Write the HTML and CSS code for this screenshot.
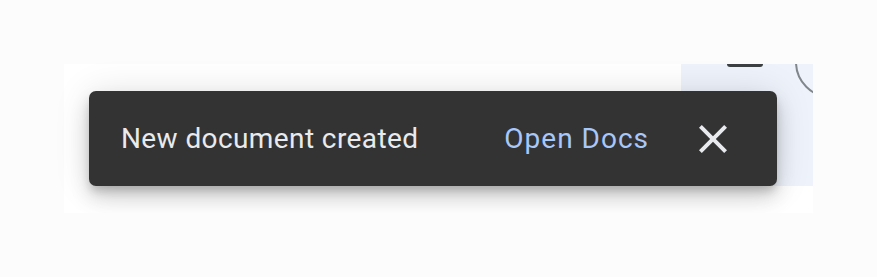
FILE: index.html
```html
<!DOCTYPE html>
<html>
<head>
<meta charset="utf-8">
<link rel="stylesheet" href="styles.css">
</head>
<body>
<div class="panel">
  <div class="side">
    <div class="tab"></div>
    <div class="ring"></div>
  </div>
  <div class="snackbar" role="status">
    <span class="label">New document created</span>
    <button class="action">Open Docs</button>
    <button class="close" aria-label="Close">
      <svg viewBox="0 0 24 24" width="48" height="48"><path fill="#e8eaed" d="M19 6.41L17.59 5 12 10.59 6.41 5 5 6.41 10.59 12 5 17.59 6.41 19 12 13.41 17.59 19 19 17.59 13.41 12z"/></svg>
    </button>
  </div>
</div>
</body>
</html>
```

FILE: styles.css
```css
html, body {
  margin: 0;
  padding: 0;
  background: #fcfcfc;
}
body {
  padding: 64px 0 0 64px;
  font-family: Roboto, "Liberation Sans", sans-serif;
}
.panel {
  position: relative;
  width: 749px;
  height: 149px;
  background: #ffffff;
  display: flex;
  justify-content: flex-end;
  align-items: flex-start;
}
.side {
  position: relative;
  width: 132px;
  height: 122px;
  background: #eef2fa;
  overflow: hidden;
}
.tab {
  margin-left: 46px;
  width: 36px;
  height: 3px;
  background: #3c4043;
  border-radius: 0 0 3px 3px;
}
.ring {
  position: absolute;
  left: 114px;
  top: -38px;
  width: 72px;
  height: 72px;
  box-sizing: border-box;
  border: 2px solid #80868b;
  border-radius: 50%;
}
.snackbar {
  position: absolute;
  left: 25px;
  top: 27px;
  width: 688px;
  height: 95px;
  box-sizing: border-box;
  background: #333333;
  border-radius: 7px;
  box-shadow: 0 6px 10px -2px rgba(0,0,0,.2), 0 12px 20px 0 rgba(0,0,0,.14), 0 2px 36px 0 rgba(0,0,0,.12);
  display: flex;
  align-items: center;
  padding: 0 40px 0 32px;
}
.label {
  flex: 1;
  color: #e8eaed;
  font-size: 28px;
  letter-spacing: 0.4px;
  line-height: 40px;
}
.action {
  background: none;
  border: 0;
  padding: 0 16px;
  font-family: inherit;
  font-size: 28px;
  color: #a8c7fa;
  letter-spacing: 1px;
  line-height: 40px;
  margin-right: 24px;
}
.close {
  width: 48px;
  height: 48px;
  padding: 0;
  border: 0;
  background: none;
  display: flex;
}
```
